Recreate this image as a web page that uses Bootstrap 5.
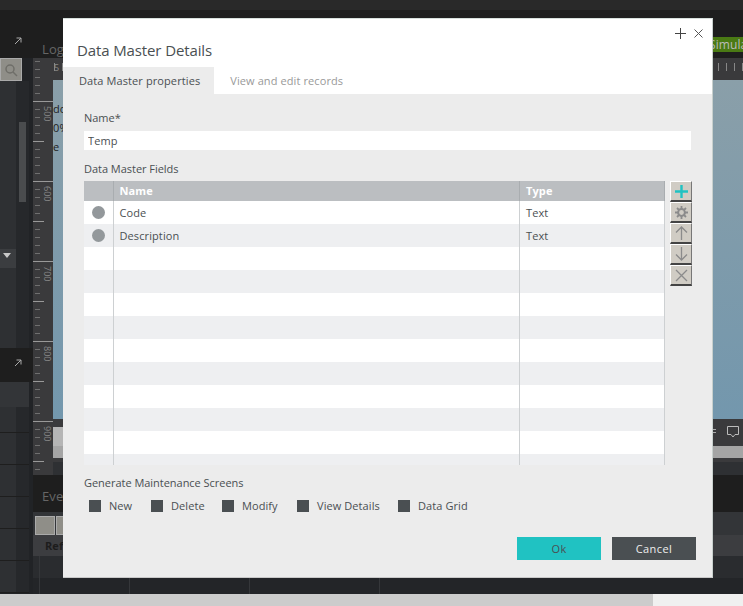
<!DOCTYPE html>
<html lang="en">
<head>
<meta charset="utf-8">
<title>Data Master Details</title>
<link href="https://cdn.jsdelivr.net/npm/bootstrap@5.3.0/dist/css/bootstrap.min.css" rel="stylesheet">
<style>
html,body{height:606px;overflow:hidden;background:#232528;}
body{font-family:"Open Sans","Liberation Sans",sans-serif;font-size:11px;color:#4a4f52;letter-spacing:.1px;}
.page-shell{width:743px;height:606px;position:relative;}
.top-strip{height:10px;background:#292929;}
.main-area{height:584px;}
.left-col{width:33px;background:#212326;}
.left-head{height:48px;background:#1e1e1e;color:#999;padding:27px 0 0 14px;}
.left-search{height:23px;width:22px;background:#8f8e88;border:1px solid #aaa;}
.left-panel{height:267px;background:#2e3033;width:29px;}
.left-scroll{width:13px;background:#26282b;padding:41px 3px 0;}
.scroll-thumb{height:80px;background:#4a4c4e;}
.left-fill{width:16px;}
.drop-row{height:19px;background:#3b3d40;padding:4px 0 0 3px;}
.drop-gap{height:80px;}
.left-head2{height:34px;background:#1e1e1e;padding:11px 0 0 14px;width:33px;}
.left-sub{height:25px;background:#333538;width:29px;}
.left-row{height:32px;width:29px;background:linear-gradient(90deg,#2e3033 16px,#26282b 16px);border-bottom:1px solid #1e1e1e;}
.left-row-first{height:26px;}
.center-col{width:710px;}
.head-row{height:48px;background:#1e1e1e;padding-left:9px;padding-top:31px;color:#666;font-size:13px;line-height:16px;}
.green-tab{width:30px;height:15px;margin-top:-4px;background:#4a7a14;color:#bbb;line-height:15px;overflow:hidden;white-space:nowrap;text-indent:-4px;font-size:12px;}
.work-row{height:417px;background:#26282b;}
.ruler{width:20px;background-color:#3a3a3c;background-image:linear-gradient(#6f6f6f 1px,transparent 1px);background-size:5px 8px;background-position:2px 3px;background-repeat:repeat-y;}
.ruler-cap{height:43px;}
.tick-major{height:80px;border-top:1px solid #999;padding:4px 0 0 10px;color:#888;font-size:9px;line-height:9px;letter-spacing:0;background:linear-gradient(#999,#999) 0 39px/11px 1px no-repeat;}
.tick-major span{display:block;writing-mode:vertical-rl;}
.tick-last{height:54px;}
.canvas-col{width:690px;}
.top-ruler{height:22px;background-color:#3a3a3c;background-image:linear-gradient(90deg,#888 1px,transparent 1px);background-size:8px 8px;background-position:1px 5px;background-repeat:repeat-x;color:#888;font-size:9px;line-height:12px;padding:4px 0 0 1px;}
.canvas-area{height:339px;background:linear-gradient(#8a9fa9,#7397ad);color:#222;padding:19px 0 0;font-size:11px;line-height:19px;overflow:hidden;}
.canvas-foot{height:27px;background:#3a3a3c;padding-top:5px;}
.foot-sliver{width:10px;height:19px;margin-top:3px;background:#b5b5b5;}
.canvas-gray{height:12px;background:#a5a5a5;}
.canvas-base{height:17px;background:#2e3033;border-top:4px solid #3a3a3c;}
.lower-row{height:119px;}
.lower-a{height:37px;background:#1e1e1e;color:#666;font-size:13px;padding:13px 0 0 9px;line-height:16px;}
.lower-b{height:23px;background:#333538;padding:4px 0 0 2px;gap:1px;}
.lower-tool{display:block;width:20px;height:19px;background:#8f8e88;border:1px solid #aaa;}
.lower-c{height:21px;background:#3c3d40;color:#1c1c1c;font-weight:700;font-size:11px;line-height:21px;padding-left:12px;}
.lower-d{height:22px;background:#2a2c2f;padding-left:6px;}
.lower-e{height:16px;background:#232528;padding-left:6px;}
.grid-cell{border-left:1px solid #35373a;height:100%;}
.foot-scroll{height:12px;background:#f0f0f0;}
.foot-thumb{width:653px;background:#ccc;}
.detail-dialog{position:absolute;left:63px;top:18px;width:650px;height:560px;background:#ececec;border:0;border-top:1px solid #d5dedb;border-right:1px solid #c8d0cd;border-bottom:1px solid #c8c8c8;}
.dialog-head{height:75px;background:#fff;position:relative;}
.dialog-title{position:absolute;left:14px;top:21px;margin:0;font-size:15px;font-weight:400;line-height:20px;letter-spacing:-.12px;color:#4a4f52;}
.dialog-tools{position:absolute;right:9px;top:9px;}
.tab-strip{position:absolute;left:0;bottom:0;margin:0;border:0;}
.tab-strip .nav-link{border:0;border-radius:0;height:27px;line-height:27px;padding:0 14px 0 16px;font-size:11px;color:#999;background:transparent;margin:0;}
.tab-strip .nav-link.active{background:#ececec;color:#4a4f52;}
.dialog-body{padding:17px 21px 0;height:484px;}
.field-label{line-height:14px;margin:0;letter-spacing:-.03px;}
.name-input{height:19px;width:607px;border:0;border-radius:0;background:#fff;margin-top:6px;padding:0 4px;font-size:11px;color:#4a4f52;letter-spacing:.1px;}
.fields-label{margin-top:12px;margin-bottom:5px;}
.table-clip{width:581px;height:284px;overflow:hidden;flex:none;}
.field-table{margin:0;table-layout:fixed;width:581px;border-collapse:collapse;--bs-table-bg:transparent;}
.field-table th,.field-table td{padding:0 0 0 6px;border:0;height:23px;font-size:11px;font-weight:400;color:#4a4f52;line-height:23px;box-shadow:none;border-right:1px solid #cdd0d2;vertical-align:middle;}
.field-table th{height:20px;line-height:20px;background:#bbbec1;color:#fff;font-weight:700;border-right:1px solid #a9adb0;}
.field-table tbody tr:nth-child(odd) td{background:#fff;}
.field-table tbody tr:nth-child(even) td{background:#eeeff1;}
.col-dot{width:29px;}
.col-type{width:145px;}
.row-dot{display:block;width:13px;height:13px;border-radius:50%;background:#93989b;margin:0 0 0 2px;}
.tool-stack{width:22px;margin-left:5px;flex:none;}
.tool-btn{width:22px;height:21px;padding:0;background:#d0ccc4;border:0;border-top:1px solid #fff;border-left:1px solid #fff;border-right:1px solid #777;border-bottom:2px solid #444;border-radius:0;display:flex;align-items:center;justify-content:center;}
.checks-label{margin-top:11px;}
.check-row{margin-top:8px;padding-left:5px;gap:0;letter-spacing:.08px;}
.check-item{display:flex;align-items:center;margin:0;padding:0;}
.form-check-input[type=checkbox].check-box{width:12px;height:12px;background:#4a4f52;border:0;border-radius:0;margin:0 8px 0 0;float:none;}
.form-check-input[type=checkbox].check-box:focus{box-shadow:none;}
.act-row{margin-top:22px;gap:11px;width:612px;}
.act-btn{width:84px;height:23px;border:0;border-radius:0;padding:0;font-size:11px;line-height:23px;letter-spacing:.4px;}
.act-ok{background:#20c2c2;color:#4a4f52;}
.act-cancel{background:#4a4f52;color:#eee;}
</style>
</head>
<body>
<div class="page-shell">
  <div class="top-strip"></div>
  <div class="main-area d-flex">
    <div class="left-col d-flex flex-column">
      <div class="left-head">
        <svg width="8" height="8" viewBox="0 0 8 8" class="d-block"><path d="M1 7 7 1M2.5 1H7V5.5" fill="none" stroke="#aaa" stroke-width="1"/></svg>
      </div>
      <div class="left-search d-flex align-items-center justify-content-center">
        <svg width="14" height="14" viewBox="0 0 14 14"><circle cx="6" cy="6" r="4" fill="none" stroke="#6f6e69" stroke-width="1.5"/><path d="M9 9 13 13" stroke="#6f6e69" stroke-width="1.5"/></svg>
      </div>
      <div class="left-panel d-flex">
        <div class="left-fill d-flex flex-column justify-content-end">
          <div class="drop-row"><svg width="8" height="5" viewBox="0 0 8 5" class="d-block"><path d="M0 0H8L4 5Z" fill="#c8c8c8"/></svg></div>
          <div class="drop-gap"></div>
        </div>
        <div class="left-scroll"><div class="scroll-thumb"></div></div>
      </div>
      <div class="left-head2">
        <svg width="8" height="8" viewBox="0 0 8 8" class="d-block"><path d="M1 7 7 1M2.5 1H7V5.5" fill="none" stroke="#aaa" stroke-width="1"/></svg>
      </div>
      <div class="left-sub"></div>
      <div class="left-row left-row-first"></div><div class="left-row"></div><div class="left-row"></div><div class="left-row"></div><div class="left-row"></div><div class="left-row"></div>
    </div>
    <div class="center-col d-flex flex-column">
      <div class="head-row d-flex justify-content-between align-items-start">
        <span>Logic</span>
        <span class="green-tab">Simulate</span>
      </div>
      <div class="work-row d-flex">
        <div class="ruler">
          <div class="ruler-cap"></div>
          <div class="tick-major"><span>500</span></div>
          <div class="tick-major"><span>600</span></div>
          <div class="tick-major"><span>700</span></div>
          <div class="tick-major"><span>800</span></div>
          <div class="tick-major tick-last"><span>900</span></div>
        </div>
        <div class="canvas-col">
          <div class="top-ruler">5</div>
          <div class="canvas-area">doc<br>0%<br>e</div>
          <div class="canvas-foot d-flex">
            <span class="foot-sliver"></span>
            <span class="flex-grow-1"></span>
            <svg width="3" height="16" viewBox="0 0 3 16"><path d="M0 5.5H3M0 8.5H3" stroke="#aaa" stroke-width="1"/></svg>
            <span style="width:9px"></span>
            <svg width="16" height="16" viewBox="0 0 16 16"><path d="M2.5 2.5H13.5V10.5H10L8 13 6 10.5H2.5Z" fill="none" stroke="#bbb" stroke-width="1"/></svg>
            <span style="width:2px"></span>
          </div>
          <div class="canvas-gray"></div>
          <div class="canvas-base"></div>
        </div>
      </div>
      <div class="lower-row d-flex flex-column">
        <div class="lower-a">Events</div>
        <div class="lower-b d-flex"><span class="lower-tool"></span><span class="lower-tool"></span></div>
        <div class="lower-c">Ref</div>
        <div class="lower-d"><div class="grid-cell"></div></div>
        <div class="lower-e d-flex">
          <div class="grid-cell" style="width:90px"></div>
          <div class="grid-cell" style="width:120px"></div>
          <div class="grid-cell" style="width:130px"></div>
          <div class="grid-cell" style="width:100px"></div>
        </div>
      </div>
    </div>
  </div>
  <div class="foot-scroll d-flex"><div class="foot-thumb"></div></div>

  <div class="detail-dialog" role="dialog">
    <div class="dialog-head">
      <h5 class="dialog-title">Data Master Details</h5>
      <div class="dialog-tools d-flex align-items-center gap-2">
        <svg width="11" height="11" viewBox="0 0 11 11"><path d="M5.5 0V11M0 5.5H11" stroke="#444" stroke-width="1"/></svg>
        <svg width="9" height="9" viewBox="0 0 9 9"><path d="M.5.5 8.5 8.5M8.5.5 .5 8.5" stroke="#555" stroke-width="1"/></svg>
      </div>
      <ul class="nav nav-tabs tab-strip">
        <li class="nav-item"><a class="nav-link active" href="#">Data Master properties</a></li>
        <li class="nav-item"><a class="nav-link" href="#">View and edit records</a></li>
      </ul>
    </div>
    <div class="dialog-body">
      <p class="field-label">Name*</p>
      <input class="form-control name-input" type="text" value="Temp">
      <p class="field-label fields-label">Data Master Fields</p>
      <div class="d-flex">
        <div class="table-clip">
          <table class="table field-table">
            <colgroup><col class="col-dot"><col><col class="col-type"></colgroup>
            <thead><tr><th></th><th>Name</th><th>Type</th></tr></thead>
            <tbody>
              <tr><td><span class="row-dot"></span></td><td>Code</td><td>Text</td></tr>
              <tr><td><span class="row-dot"></span></td><td>Description</td><td>Text</td></tr>
              <tr><td></td><td></td><td></td></tr><tr><td></td><td></td><td></td></tr>
              <tr><td></td><td></td><td></td></tr><tr><td></td><td></td><td></td></tr>
              <tr><td></td><td></td><td></td></tr><tr><td></td><td></td><td></td></tr>
              <tr><td></td><td></td><td></td></tr><tr><td></td><td></td><td></td></tr>
              <tr><td></td><td></td><td></td></tr><tr><td></td><td></td><td></td></tr>
            </tbody>
          </table>
        </div>
        <div class="tool-stack d-flex flex-column">
          <button class="btn tool-btn" type="button" aria-label="Add"><svg width="15" height="15" viewBox="0 0 15 15"><path d="M7.5 1V14M1 7.5H14" stroke="#20c2c2" stroke-width="2.4"/></svg></button>
          <button class="btn tool-btn" type="button" aria-label="Settings"><svg width="13" height="13" viewBox="0 0 13 13"><circle cx="6.5" cy="6.5" r="3.4" fill="none" stroke="#8b8b8b" stroke-width="2"/><path d="M6.5 0V3M6.5 10V13M0 6.5H3M10 6.5H13M2 2 4 4M9 9 11 11M11 2 9 4M4 9 2 11" stroke="#8b8b8b" stroke-width="1.8"/></svg></button>
          <button class="btn tool-btn" type="button" aria-label="Up"><svg width="13" height="14" viewBox="0 0 13 14"><path d="M6.5 1V14M1 6.5 6.5 1 12 6.5" fill="none" stroke="#8b8b8b" stroke-width="1.3"/></svg></button>
          <button class="btn tool-btn" type="button" aria-label="Down"><svg width="13" height="14" viewBox="0 0 13 14"><path d="M6.5 0V13M1 7.5 6.5 13 12 7.5" fill="none" stroke="#8b8b8b" stroke-width="1.3"/></svg></button>
          <button class="btn tool-btn" type="button" aria-label="Remove"><svg width="13" height="13" viewBox="0 0 13 13"><path d="M1 1 12 12M12 1 1 12" stroke="#8b8b8b" stroke-width="1.3"/></svg></button>
        </div>
      </div>
      <p class="field-label checks-label">Generate Maintenance Screens</p>
      <div class="d-flex check-row">
        <label class="check-item" style="width:62px"><input class="form-check-input check-box" type="checkbox">New</label>
        <label class="check-item" style="width:71px"><input class="form-check-input check-box" type="checkbox">Delete</label>
        <label class="check-item" style="width:75px"><input class="form-check-input check-box" type="checkbox">Modify</label>
        <label class="check-item" style="width:101px"><input class="form-check-input check-box" type="checkbox">View Details</label>
        <label class="check-item"><input class="form-check-input check-box" type="checkbox">Data Grid</label>
      </div>
      <div class="d-flex justify-content-end act-row">
        <button class="btn act-btn act-ok" type="button">Ok</button>
        <button class="btn act-btn act-cancel" type="button">Cancel</button>
      </div>
    </div>
  </div>
</div>
<script src="https://cdn.jsdelivr.net/npm/bootstrap@5.3.0/dist/js/bootstrap.bundle.min.js"></script>
</body>
</html>
